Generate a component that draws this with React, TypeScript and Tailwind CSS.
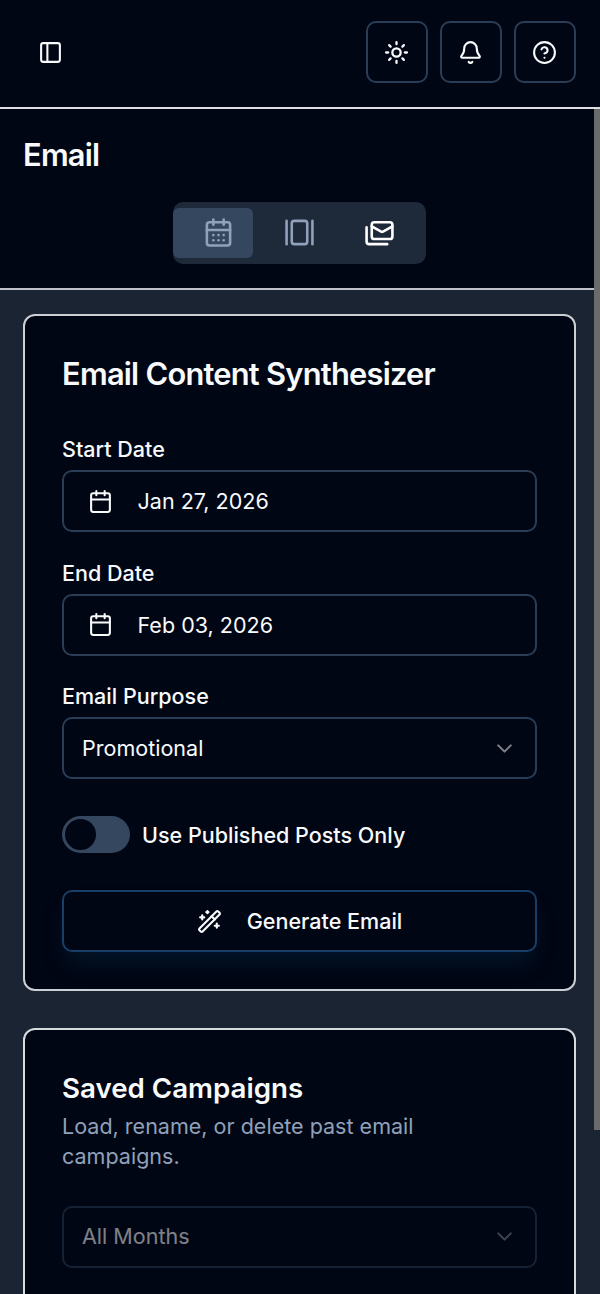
import type { ReactNode } from "react";
import {
  Bell,
  Calendar,
  CalendarDays,
  ChevronDown,
  CircleQuestionMark,
  GalleryHorizontal,
  PanelLeft,
  Sun,
  WandSparkles,
} from "lucide-react";

export default function App() {
  return (
    <div className="relative flex h-[1294px] w-[600px] flex-col overflow-hidden bg-[#1b2432] font-['Inter',sans-serif] text-[21.54px] text-slate-50 antialiased">
      <TopBar />
      <PageHeader />
      <main className="flex flex-col gap-[37px] px-[23px] pt-6">
        <Synthesizer />
        <SavedCampaigns />
      </main>
      <div className="absolute top-[109px] right-0 h-[1021px] w-1.5 bg-[#6b6b6c]" />
    </div>
  );
}

function TopBar() {
  return (
    <header className="flex h-[109px] shrink-0 items-center justify-between border-b-2 border-[#dcdee2] bg-[#010614] pr-6 pb-[3px] pl-[38px]">
      <button aria-label="Toggle sidebar">
        <PanelLeft className="size-[25px]" />
      </button>
      <div className="flex gap-3">
        <IconButton label="Theme">
          <Sun className="size-[25px]" strokeWidth={2.2} />
        </IconButton>
        <IconButton label="Notifications">
          <Bell className="size-[25px]" />
        </IconButton>
        <IconButton label="Help">
          <CircleQuestionMark className="size-[25px]" />
        </IconButton>
      </div>
    </header>
  );
}

function IconButton({ label, children }: { label: string; children: ReactNode }) {
  return (
    <button
      aria-label={label}
      className="flex size-[62px] items-center justify-center rounded-[10px] border-2 border-[#2a3d56] pr-px"
    >
      {children}
    </button>
  );
}

function PageHeader() {
  return (
    <section className="flex h-[181px] shrink-0 flex-col border-b-2 border-[#bfc2c8] bg-[#010614] px-[23px] pt-6">
      <h1 className="text-[30.8px] leading-[43px] font-semibold tracking-[-0.77px]">Email</h1>
      <div className="mt-[26px] mr-0.5 flex h-[62px] w-[253px] items-center self-center rounded-[10px] bg-[#1e293a]">
        <button
          aria-label="Calendar"
          className="flex h-[50px] w-20 items-center justify-center rounded-md bg-[#34475f] pb-px pl-3 text-slate-400"
        >
          <CalendarDays className="size-[31px]" />
        </button>
        <button
          aria-label="Gallery"
          className="flex h-[50px] w-20 items-center justify-center pb-px pl-[13px] text-slate-400"
        >
          <GalleryHorizontal className="size-[31px]" />
        </button>
        <button
          aria-label="Email"
          className="flex h-[50px] w-20 items-center justify-center pb-px pl-3.5 text-white"
        >
          <MailsIcon />
        </button>
      </div>
    </section>
  );
}

function MailsIcon() {
  return (
    <svg
      viewBox="0 0 24 24"
      fill="none"
      stroke="currentColor"
      strokeWidth="2"
      strokeLinecap="round"
      strokeLinejoin="round"
      className="size-[31px]"
    >
      <rect width="16" height="13" x="6" y="4" rx="2" />
      <path d="m22 7.2-7.3 4.2c-.45.26-.95.26-1.4 0L6 7.2" />
      <path d="M2 8v11c0 1.1.9 2 2 2h14" />
    </svg>
  );
}

function Synthesizer() {
  return (
    <section className="flex h-[677px] w-[553px] flex-col rounded-xl border-2 border-[#cccfd4] bg-[#010614] px-[37px] pt-[36px]">
      <h2 className="text-[30.8px] leading-[43px] font-semibold tracking-[-0.75px]">
        Email Content Synthesizer
      </h2>
      <div className="mt-[39.4px] flex flex-col gap-[25.4px]">
        <Field label="Start Date">
          <DateButton value="Jan 27, 2026" />
        </Field>
        <Field label="End Date">
          <DateButton value="Feb 03, 2026" />
        </Field>
        <Field label="Email Purpose">
          <Select value="Promotional" />
        </Field>
      </div>
      <div className="mt-[37px] flex items-center gap-3">
        <button
          role="switch"
          aria-checked="false"
          aria-label="Use Published Posts Only"
          className="flex h-[37px] w-[68px] items-center rounded-full bg-[#34475f] px-[3px]"
        >
          <span className="size-[31px] rounded-full bg-[#010614]" />
        </button>
        <span className="pt-px font-medium">Use Published Posts Only</span>
      </div>
      <button className="mt-[37px] flex h-[62px] shrink-0 items-center justify-center gap-[25px] rounded-[10px] border-2 border-[#173f68] bg-[#010614] font-medium shadow-[0_15px_23px_-5px_rgba(14,70,110,0.25)]">
        <WandSparkles className="size-[25px]" />
        Generate Email
      </button>
    </section>
  );
}

function Field({ label, children }: { label: string; children: ReactNode }) {
  return (
    <div className="flex flex-col gap-1.5">
      <label className="leading-[30px] font-medium">{label}</label>
      {children}
    </div>
  );
}

function DateButton({ value }: { value: string }) {
  return (
    <button className="flex h-[62px] items-center gap-[25px] rounded-[10px] border-2 border-[#2a3d56] pl-[23.5px]">
      <Calendar className="size-[25px]" />
      {value}
    </button>
  );
}

function Select({ value }: { value: string }) {
  return (
    <button className="flex h-[62px] w-full items-center justify-between rounded-[10px] border-2 border-[#2a3d56] px-[18px]">
      {value}
      <ChevronDown className="size-[25px] opacity-50" />
    </button>
  );
}

function SavedCampaigns() {
  return (
    <section className="h-[400px] w-[553px] rounded-xl border-2 border-[#d6d9dd] bg-[#010614] px-[37px] pt-[37px]">
      <h2 className="mb-px text-[27.7px] leading-[43px] font-semibold">Saved Campaigns</h2>
      <p className="leading-[30px] text-slate-400">
        Load, rename, or delete past email
        <br />
        campaigns.
      </p>
      <div className="mt-[34.5px] opacity-50">
        <Select value="All Months" />
      </div>
    </section>
  );
}
